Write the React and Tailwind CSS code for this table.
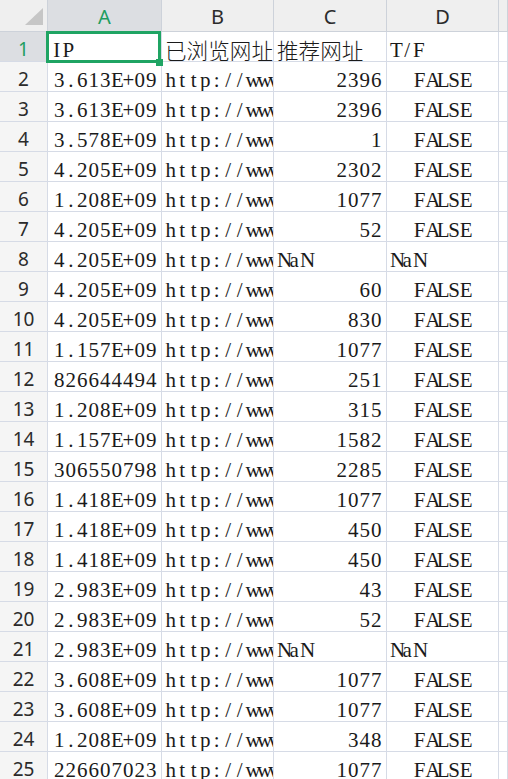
import React from "react";

const rows = [
  ["IP", "已浏览网址", "推荐网址", "T/F"],
  ["3.613E+09", "http://www", "2396", "FALSE"],
  ["3.613E+09", "http://www", "2396", "FALSE"],
  ["3.578E+09", "http://www", "1", "FALSE"],
  ["4.205E+09", "http://www", "2302", "FALSE"],
  ["1.208E+09", "http://www", "1077", "FALSE"],
  ["4.205E+09", "http://www", "52", "FALSE"],
  ["4.205E+09", "http://www", "NaN", "NaN"],
  ["4.205E+09", "http://www", "60", "FALSE"],
  ["4.205E+09", "http://www", "830", "FALSE"],
  ["1.157E+09", "http://www", "1077", "FALSE"],
  ["826644494", "http://www", "251", "FALSE"],
  ["1.208E+09", "http://www", "315", "FALSE"],
  ["1.157E+09", "http://www", "1582", "FALSE"],
  ["306550798", "http://www", "2285", "FALSE"],
  ["1.418E+09", "http://www", "1077", "FALSE"],
  ["1.418E+09", "http://www", "450", "FALSE"],
  ["1.418E+09", "http://www", "450", "FALSE"],
  ["2.983E+09", "http://www", "43", "FALSE"],
  ["2.983E+09", "http://www", "52", "FALSE"],
  ["2.983E+09", "http://www", "NaN", "NaN"],
  ["3.608E+09", "http://www", "1077", "FALSE"],
  ["3.608E+09", "http://www", "1077", "FALSE"],
  ["1.208E+09", "http://www", "348", "FALSE"],
  ["226607023", "http://www", "1077", "FALSE"],
];

function Half({ text }) {
  return (
    <span className="whitespace-nowrap">
      {text.split("").map((c, i) => (
        <span key={i} className="inline-block w-[11.5px] text-center">
          {c}
        </span>
      ))}
    </span>
  );
}

const isCJK = (s) => /[\u4e00-\u9fff]/.test(s);

function Cell({ text, align }) {
  const justify =
    align === "right" ? "justify-end pr-[4px]" : align === "center" ? "justify-center" : "justify-start pl-[3px]";
  return (
    <div
      className={`h-[30px] border-r border-b border-[#d6dbe6] bg-white flex items-end pb-[1px] overflow-hidden whitespace-nowrap leading-[20px] text-[21px] text-[#1a1a1a] [font-family:'Liberation_Serif','Noto_Sans_CJK_SC',serif] ${justify}`}
    >
      {isCJK(text) ? (
        <span className="text-[21.6px] font-light [font-family:'Noto_Sans_CJK_SC',sans-serif]">{text}</span>
      ) : (
        <Half text={text} />
      )}
    </div>
  );
}

const isNum = (s) => /^[0-9.E+]+$/.test(s);

export default function App() {
  return (
    <div className="relative w-[508px] h-[779px] overflow-hidden bg-white">
      <div className="grid grid-cols-[48px_114px_112px_113px_112px_1fr]">
        {/* Header row */}
        <div className="relative h-[32px] bg-[#efefef] border-r border-b border-[#cdd2da]">
          <svg className="absolute left-0 top-0" width="48" height="32" viewBox="0 0 48 32">
            <polygon points="43,8 43,25 25,25" fill="#c6c6c6" />
          </svg>
        </div>
        {["A", "B", "C", "D", ""].map((h, i) => (
          <div
            key={i}
            className={`h-[32px] border-r border-b border-[#cdd2da] flex items-end justify-center pb-[4px] leading-[20px] text-[20px] [font-family:'Noto_Sans',sans-serif] ${
              i === 0 ? "bg-[#dcdee2] text-[#1f9d5f]" : "bg-[#efefef] text-[#2b2b2b]"
            }`}
          >
            {h}
          </div>
        ))}

        {rows.map((r, idx) => (
          <React.Fragment key={idx}>
            <div
              className={`h-[30px] border-r border-b border-[#d6dbe6] flex items-end justify-center pb-[2px] leading-[20px] text-[19px] [font-family:'Noto_Sans',sans-serif] ${
                idx === 0 ? "bg-[#dcdee2] text-[#1f9d5f]" : "bg-[#f5f5f5] text-[#2b2b2b]"
              }`}
            >
              {idx + 1}
            </div>
            <Cell text={r[0]} align={idx === 0 ? "left" : "right"} />
            <Cell text={r[1]} align="left" />
            <Cell text={r[2]} align={isNum(r[2]) ? "right" : "left"} />
            <Cell text={r[3]} align={r[3] === "FALSE" ? "center" : "left"} />
            <div className="h-[30px] border-r border-b border-[#d6dbe6] bg-white" />
          </React.Fragment>
        ))}
      </div>

      {/* selected cell A1 */}
      <div className="absolute left-[46px] top-[31px] w-[115px] h-[32px] border-[3px] border-[#1fa463] pointer-events-none" />
      <div className="absolute left-[156px] top-[59px] w-[7px] h-[7px] bg-[#1fa463] pointer-events-none" />
    </div>
  );
}
